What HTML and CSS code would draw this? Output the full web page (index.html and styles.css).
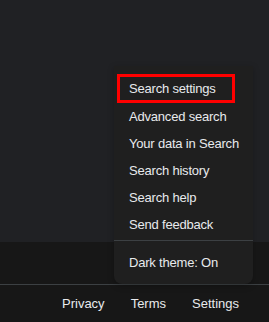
FILE: index.html
```html
<!DOCTYPE html>
<html lang="en">
<head>
    <meta charset="UTF-8">
    <meta name="viewport" content="width=device-width, initial-scale=1.0">
    <title>Google</title>
    <link rel="stylesheet" href="styles.css">
</head>
<body>
    <div class="page"></div>
    <div class="country-bar"></div>
    <div class="footer">
        <a href="#">Privacy</a>
        <a href="#">Terms</a>
        <a href="#">Settings</a>
    </div>

    <div class="settings-menu">
        <a href="#" class="menu-item active">Search settings</a>
        <a href="#" class="menu-item">Advanced search</a>
        <a href="#" class="menu-item">Your data in Search</a>
        <a href="#" class="menu-item">Search history</a>
        <a href="#" class="menu-item">Search help</a>
        <a href="#" class="menu-item">Send feedback</a>
        <div class="menu-divider"></div>
        <a href="#" class="menu-item">Dark theme: On</a>
    </div>
</body>
</html>
```

FILE: styles.css
```css
/* styles.css */
html, body {
    height: 100%;
}

body {
    margin: 0;
    display: flex;
    flex-direction: column;
    background-color: #171717;
    font-family: "Liberation Sans", Arial, sans-serif;
    font-size: 13px;
    color: #e8eaed;
}

a {
    color: #e8eaed;
    text-decoration: none;
}

.page {
    flex: 1;
    background-color: #202124;
}

.country-bar {
    height: 42px;
    background-color: #171717;
}

.footer {
    height: 37px;
    border-top: 1px solid #3c4043;
    display: flex;
    justify-content: flex-end;
    align-items: center;
    gap: 26px;
    padding-right: 30px;
}

.settings-menu {
    position: absolute;
    top: 66px;
    left: 114px;
    width: 139px;
    padding: 8px 0;
    background-color: #1f1f1f;
    border-radius: 0 0 8px 8px;
    box-shadow: 0 2px 6px rgba(0, 0, 0, 0.25);
}

.menu-item {
    display: block;
    padding-left: 15px;
    line-height: 27px;
    letter-spacing: -0.2px;
    white-space: nowrap;
}

.menu-item.active {
    margin: 0 18px 0 3px;
    padding-left: 9px;
    line-height: 23px;
    border: 3px solid #ff0000;
}

.menu-divider {
    height: 1px;
    margin: 2px 0 8px;
    background-color: #3c4043;
}
```
